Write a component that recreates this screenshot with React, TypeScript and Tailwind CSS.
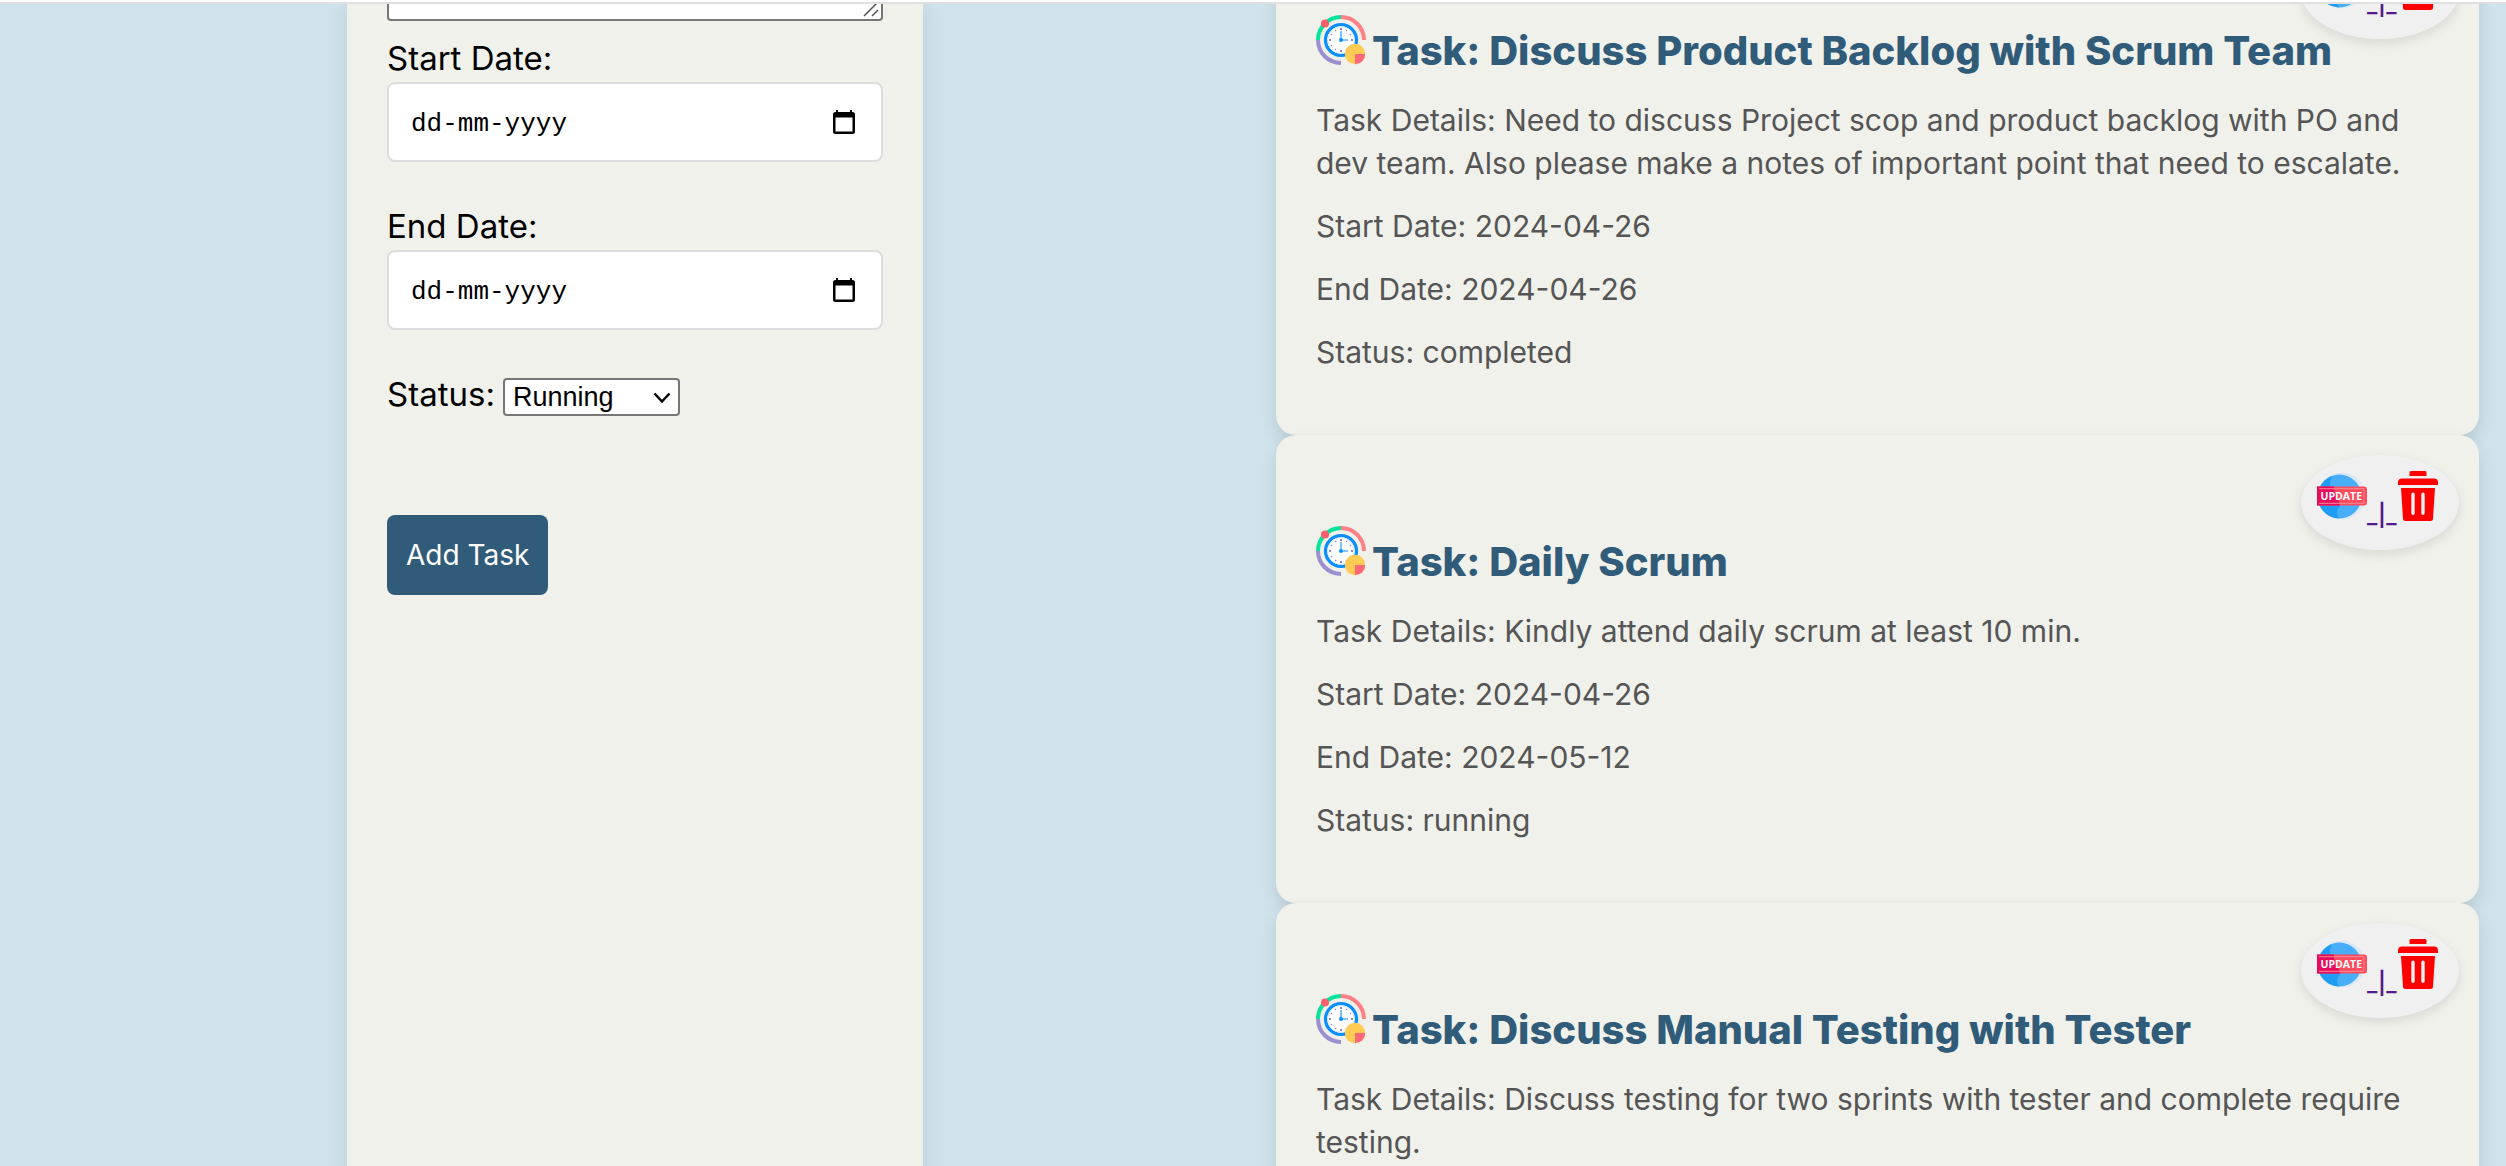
import React from "react";

type Task = {
  title: string;
  details: string;
  start: string;
  end: string;
  status: string;
};

const tasks: Task[] = [
  {
    title: "Discuss Product Backlog with Scrum Team",
    details:
      "Need to discuss Project scop and product backlog with PO and dev team. Also please make a notes of important point that need to escalate.",
    start: "2024-04-26",
    end: "2024-04-26",
    status: "completed",
  },
  {
    title: "Daily Scrum",
    details: "Kindly attend daily scrum at least 10 min.",
    start: "2024-04-26",
    end: "2024-05-12",
    status: "running",
  },
  {
    title: "Discuss Manual Testing with Tester",
    details: "Discuss testing for two sprints with tester and complete require testing.",
    start: "2024-04-26",
    end: "2024-05-12",
    status: "running",
  },
];

const hourDots = Array.from({ length: 12 }, (_, i) => {
  const a = (i * Math.PI) / 6;
  return { x: 25 + 11 * Math.sin(a), y: 25 - 11 * Math.cos(a), major: i % 3 === 0 };
});

function ClockIcon() {
  return (
    <svg viewBox="0 0 50 50" className="size-[50px] shrink-0" aria-hidden="true">
      <g fill="none" strokeWidth="4">
        <path d="M25 2a23 23 0 0 1 23 23" stroke="#ff8086" />
        <path d="M2 25A23 23 0 0 1 25 2" stroke="#05e39c" />
        <path d="M25 48A23 23 0 0 1 2 25" stroke="#9b8fcf" />
      </g>
      <circle cx="25" cy="25" r="15.4" fill="#fff" stroke="#0b8fff" strokeWidth="3.4" />
      <circle cx="25" cy="25" r="13.4" fill="none" stroke="#d8ebff" strokeWidth="1" />
      {hourDots.map((d, i) => (
        <rect
          key={i}
          x={d.x - (d.major ? 1 : 0.7)}
          y={d.y - (d.major ? 1 : 0.7)}
          width={d.major ? 2 : 1.4}
          height={d.major ? 2 : 1.4}
          fill="#9184cf"
        />
      ))}
      <path d="M25 16v9h7" fill="none" stroke="#5ab4ff" strokeWidth="1.6" />
      <circle cx="25" cy="25" r="2" fill="#0b8fff" />
      <circle cx="9" cy="8.500" r="4" fill="#f95f6b" />
      <circle cx="39" cy="39" r="10.200" fill="#ffcb52" />
      <path d="M39 39h10.200a10.200 10.200 0 0 1-10.200 10.200z" fill="#ff6878" />
    </svg>
  );
}

function UpdateIcon() {
  return (
    <svg viewBox="0 0 50 50" className="size-[50px]" aria-hidden="true">
      <circle cx="25" cy="25" r="23.500" fill="#dbe9fb" />
      <circle cx="22.500" cy="25.500" r="22" fill="#49aef8" />
      <path
        d="M15 5A22 22 0 0 0 22 47.500c-2.500-3-2.500-8 0-11 3-3 1-8-2-12s-7-6-7-12c0-3 1-5 2-7.500z"
        fill="#1f9cf3"
      />
      <path d="M0 15.500h47a3 3 0 0 1 3 3v13a3 3 0 0 1-3 3H0z" fill="#ff4b5e" />
      <path d="M0 15.500h17c-1 7 5 11 6 19H0z" fill="#e80a5b" />
      <path d="M2 17.700h45v14.600H2" fill="none" stroke="#ff8a94" strokeWidth="1" />
      <text
        x="3.500"
        y="28.800"
        fontSize="10.500"
        fontWeight="700"
        fill="#fff"
        fontFamily="Open Sans, sans-serif"
      >
        UPDATE
      </text>
    </svg>
  );
}

function TrashIcon() {
  return (
    <svg viewBox="0 0 40 50" className="h-[50px] w-10" fill="#fe0000" aria-hidden="true">
      <path d="M13 0h14a1.500 1.500 0 0 1 1.500 1.500V5h-17V1.500A1.500 1.500 0 0 1 13 0z" />
      <path d="M4 7.500h32a4 4 0 0 1 4 4V14H0v-2.500a4 4 0 0 1 4-4z" />
      <path
        fillRule="evenodd"
        d="M3 17h34l-2 30.500a2.500 2.500 0 0 1-2.500 2.500h-25A2.500 2.500 0 0 1 5 47.500zM15 21.500a1.700 1.700 0 0 0-1.700 1.700v19a1.700 1.700 0 0 0 3.400 0v-19A1.700 1.700 0 0 0 15 21.500zm10 0a1.700 1.700 0 0 0-1.700 1.700v19a1.700 1.700 0 0 0 3.400 0v-19a1.700 1.700 0 0 0-1.700-1.700z"
      />
    </svg>
  );
}

function TaskCard({ task }: { task: Task }) {
  return (
    <article className="relative rounded-[20px] bg-[#f0f1eb] px-10 pt-20 pb-10 shadow-[0_8px_16px_rgba(0,0,0,0.12)]">
      <div className="absolute top-5 right-5 flex h-[95px] w-[158px] items-start rounded-[50%] bg-[#f0f0f0] pt-4 pl-4 shadow-[0_4px_12px_rgba(0,0,0,0.1)]">
        <a href="#update" aria-label="Update task">
          <UpdateIcon />
        </a>
        <span className="mt-6 mr-1 w-[27px] text-center text-[22px] leading-10 font-semibold text-[#551a8b]">
          _|_
        </span>
        <a href="#delete" aria-label="Delete task">
          <TrashIcon />
        </a>
      </div>
      <h2 className="flex h-[95px] items-start gap-1.5 pt-[11px] text-[40px] leading-[72px] font-extrabold whitespace-nowrap text-[#305c7a]">
        <ClockIcon />
        <span>{`Task: ${task.title}`}</span>
      </h2>
      <div className="flex flex-col gap-5 pb-[21px] text-[30px] leading-[43px] text-[#555]">
        <p>{`Task Details: ${task.details}`}</p>
        <p>{`Start Date: ${task.start}`}</p>
        <p>{`End Date: ${task.end}`}</p>
        <p>{`Status: ${task.status}`}</p>
      </div>
    </article>
  );
}

function DateField({ id, label }: { id: string; label: string }) {
  return (
    <div className="mb-10">
      <label htmlFor={id} className="block leading-12">
        {label}
      </label>
      <div className="relative">
        <input
          id={id}
          type="text"
          placeholder="dd-mm-yyyy"
          className="block h-20 w-full rounded-lg border-2 border-[#ddd] bg-white px-[22px] pt-1 font-['Liberation_Mono',monospace] text-[26px] text-black placeholder:text-black"
        />
        <svg
          viewBox="0 0 22 24"
          className="pointer-events-none absolute top-7 right-7 h-6 w-[22px]"
          aria-hidden="true"
        >
          <path
            fillRule="evenodd"
            d="M3 0h2v2h12V0h2v2h.500A2.500 2.500 0 0 1 22 4.500v17a2.500 2.500 0 0 1-2.500 2.500h-17A2.500 2.500 0 0 1 0 21.500v-17A2.500 2.500 0 0 1 2.500 2H3zM2.500 7.500v14h17v-14z"
          />
        </svg>
      </div>
    </div>
  );
}

export default function App() {
  return (
    <div className="flex h-screen flex-col overflow-hidden bg-[#d0e3ec] font-['Inter',sans-serif]">
      <div className="h-1 shrink-0 border-b-2 border-[#e0e0e0] bg-white" />
      <main className="grid min-h-0 flex-1 grid-cols-[347fr_576fr_353fr_1203fr_27fr] overflow-hidden">
        <form className="col-start-2 bg-[#f0f1eb] px-10 text-[33px] text-black shadow-[0_0_20px_rgba(0,0,0,0.1)]">
          <div className="relative -mt-[104px] mb-[13px]">
            <textarea
              aria-label="Task details"
              className="block h-[121px] w-full resize-none rounded border-2 border-[#767676] bg-white"
            />
            <svg
              viewBox="0 0 16 16"
              className="pointer-events-none absolute right-1 bottom-1 size-4"
              aria-hidden="true"
            >
              <path d="M1 15 15 1M9 15l6-6" stroke="#555" strokeWidth="1.500" />
            </svg>
          </div>
          <DateField id="start" label="Start Date:" />
          <DateField id="end" label="End Date:" />
          <div className="flex h-[50px] items-center gap-2">
            <label htmlFor="status">Status:</label>
            <div className="relative mt-1">
              <select
                id="status"
                className="block h-[38px] w-[177px] appearance-none rounded border-2 border-[#767676] bg-white pl-2 font-['Liberation_Sans',sans-serif] text-[27px] leading-8 text-black"
              >
                <option>Running</option>
                <option>Completed</option>
              </select>
              <svg
                viewBox="0 0 18 12"
                className="pointer-events-none absolute top-[14px] right-[9px] h-3 w-[18px]"
                aria-hidden="true"
              >
                <path d="M1.500 1.500 9 9.500l7.500-8" fill="none" stroke="#000" strokeWidth="2.500" />
              </svg>
            </div>
          </div>
          <button
            type="button"
            className="mt-[95px] block h-20 rounded-lg bg-[#305c7a] px-[19px] text-[28px] text-white"
          >
            Add Task
          </button>
        </form>
        <section className="col-start-4 -mt-20">
          {tasks.map((task) => (
            <TaskCard key={task.title} task={task} />
          ))}
        </section>
      </main>
    </div>
  );
}
